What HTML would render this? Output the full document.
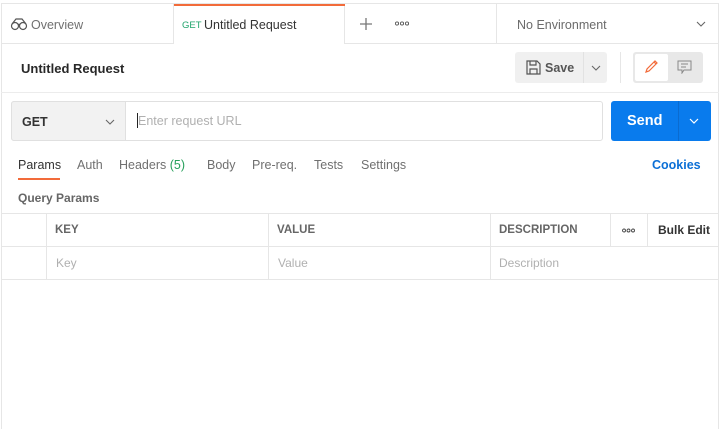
<!DOCTYPE html>
<html><head><style>
*{box-sizing:border-box;margin:0;padding:0}
body{width:722px;height:429px;background:#fff;font-family:"Liberation Sans",sans-serif;position:relative;overflow:hidden;color:#212121}
.a{position:absolute}
.t{font-size:12.5px}
</style></head><body>
<div class="a" style="left:1px;top:3px;width:718px;height:426px;border-left:1px solid #e6e6e6;border-top:1px solid #e6e6e6;border-right:1px solid #e6e6e6"></div>
<!-- tab bar -->
<div class="a" style="left:1px;top:43px;width:718px;height:1px;background:#e6e6e6"></div>
<div class="a" style="left:173px;top:4px;width:172px;height:40px;background:#fff;border-left:1px solid #e6e6e6;border-right:1px solid #e6e6e6"></div>
<div class="a" style="left:174px;top:4px;width:171px;height:2px;background:#f26b3a"></div>
<svg class="a" style="left:10px;top:17px" width="18" height="14" viewBox="0 0 18 14" fill="none" stroke="#555" stroke-width="1.2"><circle cx="5" cy="9" r="3.5"/><circle cx="13" cy="9" r="3.5"/><path d="M2 7 L6 2 H12 L16 7 M8 8 Q9 6.5 10 8"/></svg>
<div class="a t" style="left:31px;top:18px;color:#707070">Overview</div>
<div class="a" style="left:182px;top:20px;font-size:9.5px;color:#1fa46b">GET</div>
<div class="a t" style="left:204px;top:18px;color:#333">Untitled Request</div>
<svg class="a" style="left:359px;top:17px" width="14" height="14" stroke="#777" stroke-width="1.3"><path d="M7 1V13M1 7H13"/></svg>
<svg class="a" style="left:395px;top:21px" width="14" height="5" fill="none" stroke="#555" stroke-width="0.9"><circle cx="2" cy="2.5" r="1.6"/><circle cx="7" cy="2.5" r="1.6"/><circle cx="12" cy="2.5" r="1.6"/></svg>
<div class="a" style="left:496px;top:4px;width:1px;height:39px;background:#e6e6e6"></div>
<div class="a t" style="left:517px;top:18px;color:#6b6b6b">No Environment</div>
<svg class="a" style="left:696px;top:21px" width="10" height="6" fill="none" stroke="#666" stroke-width="1.1"><path d="M1 1L5 5L9 1"/></svg>
<!-- header -->
<div class="a" style="left:1px;top:92px;width:718px;height:1px;background:#ececec"></div>
<div class="a" style="left:21px;top:61px;font-size:13px;font-weight:bold;color:#282828">Untitled Request</div>
<div class="a" style="left:515px;top:52px;width:92px;height:31px;background:#f0f0f0;border-radius:3px"></div>
<div class="a" style="left:583px;top:52px;width:1px;height:31px;background:#e2e2e2"></div>
<svg class="a" style="left:526px;top:60px" width="15" height="15" fill="none" stroke="#555" stroke-width="1.2"><path d="M1 1H11L14 4V14H1Z M4 1V5H10V1 M4 14V9H11V14"/></svg>
<div class="a" style="left:545px;top:61px;font-size:12.5px;font-weight:bold;color:#555">Save</div>
<svg class="a" style="left:591px;top:65px" width="10" height="6" fill="none" stroke="#666" stroke-width="1.1"><path d="M1 1L5 5L9 1"/></svg>
<div class="a" style="left:620px;top:52px;width:1px;height:31px;background:#e6e6e6"></div>
<div class="a" style="left:633px;top:52px;width:70px;height:31px;background:#e8e8e8;border-radius:3px"></div>
<div class="a" style="left:635px;top:54px;width:33px;height:27px;background:#fff;border-radius:2px"></div>
<svg class="a" style="left:644px;top:59px" width="15" height="15" fill="none" stroke="#f26b3a" stroke-width="1.2"><path d="M2 13L3 10L11 2L13 4L5 12Z M10 3L12 5"/></svg>
<svg class="a" style="left:677px;top:60px" width="15" height="14" fill="none" stroke="#888" stroke-width="1"><path d="M1 1H14V10H7L5 13V10H1Z M4 4H11M4 7H9"/></svg>
<!-- url row -->
<div class="a" style="left:11px;top:101px;width:592px;height:40px;border:1px solid #e0e0e0;border-radius:3px"></div>
<div class="a" style="left:11px;top:101px;width:115px;height:40px;background:#f2f2f2;border:1px solid #e0e0e0;border-radius:3px 0 0 3px"></div>
<div class="a" style="left:22px;top:115px;font-size:12.5px;font-weight:bold;color:#333">GET</div>
<svg class="a" style="left:105px;top:119px" width="10" height="6" fill="none" stroke="#666" stroke-width="1.1"><path d="M1 1L5 5L9 1"/></svg>
<div class="a" style="left:137px;top:113px;width:1px;height:15px;background:#222"></div>
<div class="a t" style="left:138px;top:114px;color:#b0b0b0">Enter request URL</div>
<div class="a" style="left:611px;top:101px;width:100px;height:40px;background:#097bed;border-radius:3px"></div>
<div class="a" style="left:678px;top:101px;width:1px;height:40px;background:#0a6bd0"></div>
<div class="a" style="left:627px;top:113px;font-size:14.5px;font-weight:bold;color:#fff">Send</div>
<svg class="a" style="left:689px;top:118px" width="10" height="6" fill="none" stroke="#fff" stroke-width="1.2"><path d="M1 1L5 5L9 1"/></svg>
<!-- tabs -->
<div class="a t" style="left:18px;top:158px;color:#333">Params</div>
<div class="a" style="left:18px;top:178px;width:42px;height:2px;background:#f26b3a"></div>
<div class="a t" style="left:77px;top:158px;color:#707070">Auth</div>
<div class="a t" style="left:119px;top:158px;color:#707070">Headers <span style="color:#26a05b">(5)</span></div>
<div class="a t" style="left:207px;top:158px;color:#707070">Body</div>
<div class="a t" style="left:252px;top:158px;color:#707070">Pre-req.</div>
<div class="a t" style="left:314px;top:158px;color:#707070">Tests</div>
<div class="a t" style="left:361px;top:158px;color:#707070">Settings</div>
<div class="a" style="left:652px;top:158px;font-size:12.5px;font-weight:bold;color:#0b6fd6">Cookies</div>
<div class="a" style="left:18px;top:191px;font-size:12px;font-weight:bold;color:#666">Query Params</div>
<!-- table -->
<div class="a" style="left:1px;top:213px;width:718px;height:1px;background:#e6e6e6"></div>
<div class="a" style="left:1px;top:246px;width:718px;height:1px;background:#e6e6e6"></div>
<div class="a" style="left:1px;top:279px;width:718px;height:1px;background:#e6e6e6"></div>
<div class="a" style="left:46px;top:213px;width:1px;height:66px;background:#e6e6e6"></div>
<div class="a" style="left:268px;top:213px;width:1px;height:66px;background:#e6e6e6"></div>
<div class="a" style="left:490px;top:213px;width:1px;height:66px;background:#e6e6e6"></div>
<div class="a" style="left:610px;top:213px;width:1px;height:33px;background:#e6e6e6"></div>
<div class="a" style="left:647px;top:213px;width:1px;height:33px;background:#e6e6e6"></div>
<div class="a" style="left:55px;top:224px;font-size:11.5px;font-weight:bold;color:#666">KEY</div>
<div class="a" style="left:277px;top:224px;font-size:11.5px;font-weight:bold;color:#666">VALUE</div>
<div class="a" style="left:499px;top:224px;font-size:11.5px;font-weight:bold;color:#666">DESCRIPTION</div>
<svg class="a" style="left:622px;top:228px" width="14" height="5" fill="none" stroke="#444" stroke-width="0.9"><circle cx="2" cy="2.5" r="1.5"/><circle cx="6.5" cy="2.5" r="1.5"/><circle cx="11" cy="2.5" r="1.5"/></svg>
<div class="a" style="left:658px;top:223px;font-size:12px;font-weight:bold;color:#333">Bulk Edit</div>
<div class="a" style="left:56px;top:256px;font-size:12px;color:#b0b0b0">Key</div>
<div class="a" style="left:278px;top:256px;font-size:12px;color:#b0b0b0">Value</div>
<div class="a" style="left:499px;top:256px;font-size:12px;color:#b0b0b0">Description</div>
</body></html>
